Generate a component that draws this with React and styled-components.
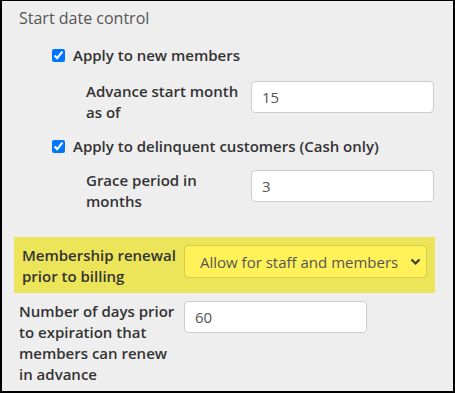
import React from 'react';
import styled, { createGlobalStyle } from 'styled-components';

const GlobalStyle = createGlobalStyle`
  body {
    margin: 0;
    font-family: "Open Sans", "Liberation Sans", sans-serif;
  }
`;

const Panel = styled.div`
  box-sizing: border-box;
  width: 455px;
  height: 393px;
  border: 2px solid #000;
  border-top-width: 1px;
  background: #eeeeee;
  padding: 6px 0 0 17px;
`;

const Title = styled.div`
  font-size: 16px;
  line-height: 22px;
  color: #555;
`;

const CheckRow = styled.label`
  display: flex;
  align-items: center;
  gap: 8px;
  margin: ${(p) => p.$top}px 0 0 33px;
  font-size: 15px;
  font-weight: 600;
  line-height: 21px;
  color: #333;
`;

const Check = styled.input`
  width: 13px;
  height: 13px;
  margin: 0;
`;

const FieldRow = styled.div`
  display: grid;
  grid-template-columns: 165px 183px;
  align-items: start;
  margin: ${(p) => p.$top}px 0 0 ${(p) => p.$indent || 0}px;
`;

const Label = styled.div`
  font-size: 15px;
  font-weight: 600;
  line-height: 21px;
  color: #333;
  white-space: nowrap;
`;

const TextInput = styled.input`
  box-sizing: border-box;
  width: 183px;
  height: 32px;
  margin: 0;
  padding: 0 10px;
  border: 1px solid #cccccc;
  border-radius: 4px;
  background: #fff;
  font-family: "Open Sans", "Liberation Sans", sans-serif;
  font-size: 15px;
  color: #555;
  outline: none;
`;

const Highlight = styled.div`
  display: grid;
  grid-template-columns: 162px 243px;
  align-items: start;
  width: 421px;
  box-sizing: border-box;
  margin: 25px 0 0 -5px;
  padding: 8px 8px 6px 8px;
  background: #ece55a;
`;

const SelectBox = styled.div`
  box-sizing: border-box;
  height: 33px;
  display: flex;
  align-items: center;
  justify-content: space-between;
  padding: 0 5px 0 15px;
  border: 1px solid #d5cc48;
  border-radius: 4px;
  background: #fff258;
  font-size: 15px;
  color: #555;
`;

const Chevron = () => (
  <svg width="11" height="8" viewBox="0 0 11 8">
    <path d="M1.5 1.5 L5.5 5.5 L9.5 1.5" fill="none" stroke="#3d3d2a" strokeWidth="2.2" />
  </svg>
);

export default function App() {
  return (
    <>
      <GlobalStyle />
      <Panel>
        <Title>Start date control</Title>

        <CheckRow $top={16}>
          <Check type="checkbox" defaultChecked />
          Apply to new members
        </CheckRow>

        <FieldRow $top={15} $indent={67}>
          <Label>
            Advance start month
            <br />
            as of
          </Label>
          <TextInput defaultValue="15" />
        </FieldRow>

        <CheckRow $top={13}>
          <Check type="checkbox" defaultChecked />
          Apply to delinquent customers (Cash only)
        </CheckRow>

        <FieldRow $top={13} $indent={67}>
          <Label>
            Grace period in
            <br />
            months
          </Label>
          <TextInput defaultValue="3" />
        </FieldRow>

        <Highlight>
          <Label>
            Membership renewal
            <br />
            prior to billing
          </Label>
          <SelectBox>
            Allow for staff and members
            <Chevron />
          </SelectBox>
        </Highlight>

        <FieldRow $top={8}>
          <Label>
            Number of days prior
            <br />
            to expiration that
            <br />
            members can renew
            <br />
            in advance
          </Label>
          <TextInput defaultValue="60" />
        </FieldRow>
      </Panel>
    </>
  );
}
